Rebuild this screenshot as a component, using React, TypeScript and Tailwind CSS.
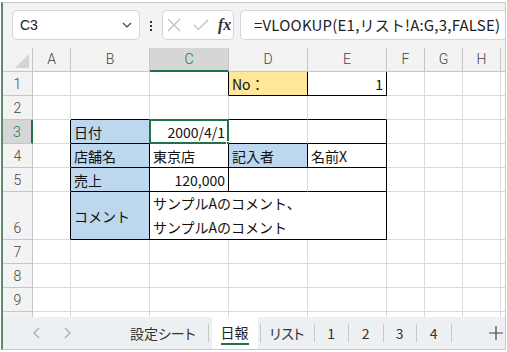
import React from "react";

const GRID = "#dadada";
const BLK = "#000000";
const BLUE = "#bdd7ee";
const ORANGE = "#ffe699";

type Cell = {
  r: number;
  c: number;
  cs?: number;
  text?: string;
  lines?: string[];
  bg?: string;
  align?: "left" | "right";
  br?: string;
  bb?: string;
  center?: boolean;
};

const colLetters = ["A", "B", "C", "D", "E", "F", "G", "H", "I"];
const rowHeights = [24, 24, 24, 24, 24, 48, 24, 24, 24, 24];

function buildCells(): Cell[] {
  const special: Record<string, Partial<Cell>> = {
    "1-3": { br: BLK },
    "1-4": { text: "No：", bg: ORANGE, br: BLK, bb: BLK },
    "1-5": { text: "1", align: "right", br: BLK, bb: BLK },
    "2-2": { bb: BLK },
    "2-3": { bb: BLK },
    "2-4": { bb: BLK },
    "2-5": { bb: BLK },
    "3-1": { br: BLK },
    "4-1": { br: BLK },
    "5-1": { br: BLK },
    "6-1": { br: BLK },
    "3-2": { text: "日付", bg: BLUE, br: BLK, bb: BLK },
    "3-3": { text: "2000/4/1", align: "right", br: BLK, bb: BLK },
    "3-4": { bb: BLK },
    "3-5": { br: BLK, bb: BLK },
    "4-2": { text: "店舗名", bg: BLUE, br: BLK, bb: BLK },
    "4-3": { text: "東京店", br: BLK, bb: BLK },
    "4-4": { text: "記入者", bg: BLUE, br: BLK, bb: BLK },
    "4-5": { text: "名前X", br: BLK, bb: BLK },
    "5-2": { text: "売上", bg: BLUE, br: BLK, bb: BLK },
    "5-3": { text: "120,000", align: "right", br: BLK, bb: BLK },
    "5-4": { bb: BLK },
    "5-5": { br: BLK, bb: BLK },
    "6-2": { text: "コメント", bg: BLUE, br: BLK, bb: BLK, center: true },
  };
  const cells: Cell[] = [];
  for (let r = 1; r <= 10; r++) {
    for (let c = 1; c <= 9; c++) {
      if (r === 6 && (c === 4 || c === 5)) continue;
      if (r === 6 && c === 3) {
        cells.push({
          r,
          c,
          cs: 3,
          lines: ["サンプルAのコメント、", "サンプルAのコメント"],
          br: BLK,
          bb: BLK,
        });
        continue;
      }
      const s = special[`${r}-${c}`] || {};
      cells.push({ r, c, ...s });
    }
  }
  return cells;
}

function XIcon() {
  return (
    <svg width="14" height="14" viewBox="0 0 14 14">
      <path d="M1 1 L13 13 M13 1 L1 13" stroke="#bdbdbd" strokeWidth="1.2" fill="none" />
    </svg>
  );
}
function CheckIcon() {
  return (
    <svg width="16" height="12" viewBox="0 0 16 12">
      <path d="M1 6 L5.5 10.5 L15 1" stroke="#bdbdbd" strokeWidth="1.2" fill="none" />
    </svg>
  );
}
function Chevron() {
  return (
    <svg width="10" height="6" viewBox="0 0 10 6">
      <path d="M1 1 L5 5 L9 1" stroke="#444" strokeWidth="1.2" fill="none" />
    </svg>
  );
}

export default function App() {
  const cells = buildCells();
  const cellFont = { fontFamily: '"Noto Sans CJK JP", "Noto Sans", sans-serif' };
  return (
    <div className="w-[507px] h-[352px] bg-white overflow-hidden">
      <div className="mt-[2px] ml-[1px] w-[505px] h-[348px] border-t border-[#c8c8c8] border-l-2 border-l-[#5b8c6e] border-r border-r-[#c8c8c8] border-b border-b-[#c8c8c8] flex flex-col overflow-hidden bg-[#f3f3f3]">
        {/* Formula bar */}
        <div
          className="h-[45px] flex items-center pl-[9px] shrink-0"
          style={{ fontFamily: '"Noto Sans CJK JP", "Noto Sans", sans-serif' }}
        >
          <div className="w-[128px] h-[30px] bg-white border border-[#d6d6d6] rounded-[5px] flex items-center justify-between pl-[7px] pr-[7px] -mt-[1px]">
            <span className="text-[14px] text-[#222] leading-none" style={{ fontFamily: '"Liberation Sans", Arial, sans-serif' }}>C3</span>
            <Chevron />
          </div>
          <div className="w-[22px] flex justify-center">
            <div className="flex flex-col gap-[2px]">
              <div className="w-[2px] h-[2px] bg-[#333]" />
              <div className="w-[2px] h-[2px] bg-[#333]" />
              <div className="w-[2px] h-[2px] bg-[#333]" />
            </div>
          </div>
          <div className="w-[72px] h-[30px] bg-white border border-[#d6d6d6] rounded-[5px] flex items-center pl-[4px] -mt-[1px]">
            <div className="w-[14px] flex justify-center"><XIcon /></div>
            <div className="ml-[12px]"><CheckIcon /></div>
            <span
              className="ml-[9px] text-[16px] italic font-bold text-[#333] leading-none"
              style={{ fontFamily: '"Liberation Serif", "Times New Roman", serif' }}
            >
              fx
            </span>
          </div>
          <div className="ml-[6px] flex-1 h-[30px] bg-white border border-[#d6d6d6] border-r-0 rounded-l-[5px] flex items-center pl-[13px] -mt-[1px] overflow-hidden whitespace-nowrap">
            <span className="text-[15px] tracking-[0.2px] text-[#222]">=VLOOKUP(E1,リスト!A:G,3,FALSE)</span>
          </div>
        </div>

        {/* Grid */}
        <div className="h-[269px] shrink-0 overflow-hidden bg-white">
          <div
            className="grid grid-cols-[30px_38px_79px_79px_79px_79px_38px_38px_38px_20px]"
            style={{ gridTemplateRows: `24px ${rowHeights.map((h) => h + "px").join(" ")}` }}
          >
            <div className="relative bg-[#f3f3f3] border-r border-b border-[#c6c6c6]" style={{ gridRow: 1, gridColumn: 1 }}>
              <div className="absolute right-[3px] bottom-[3px] w-0 h-0 border-l-[14px] border-l-transparent border-b-[14px] border-b-[#d4d4d4]" />
            </div>
            {colLetters.map((l, i) => {
              const sel = l === "C";
              return (
                <div
                  key={l}
                  className={`flex items-center justify-center text-[14px] border-r ${sel ? "bg-[#d6d6d6] text-[#217346] border-b-2 border-b-[#217346] border-r-[#c6c6c6]" : "bg-[#f3f3f3] text-[#444] border-b border-[#c6c6c6]"}`}
                  style={{ gridRow: 1, gridColumn: i + 2, fontFamily: 'Roboto, "Noto Sans", sans-serif', fontWeight: 300 }}
                >
                  {l === "I" ? "" : l}
                </div>
              );
            })}
            {rowHeights.map((_, i) => {
              const r = i + 1;
              const sel = r === 3;
              return (
                <div
                  key={r}
                  className={`flex items-end justify-center pb-[1px] text-[14px] leading-[20px] border-b ${sel ? "bg-[#d6d6d6] text-[#217346] border-r-2 border-r-[#217346] border-b-[#c6c6c6]" : "bg-[#f3f3f3] text-[#444] border-r border-[#c6c6c6]"}`}
                  style={{ gridRow: r + 1, gridColumn: 1, fontFamily: 'Roboto, "Noto Sans", sans-serif', fontWeight: 300 }}
                >
                  {r <= 9 ? r : ""}
                </div>
              );
            })}
            {cells.map((cell) => (
              <div
                key={`${cell.r}-${cell.c}`}
                className={`relative flex border-r border-b text-[14px] text-[#111] whitespace-nowrap ${cell.center ? "items-center" : "items-end"} ${cell.align === "right" ? "justify-end pr-[3px]" : "justify-start pl-[3px]"}`}
                style={{
                  gridRow: cell.r + 1,
                  gridColumn: `${cell.c + 1} / span ${cell.cs || 1}`,
                  backgroundColor: cell.bg || "#ffffff",
                  borderRightColor: cell.br || GRID,
                  borderBottomColor: cell.bb || GRID,
                  ...cellFont,
                }}
              >
                {cell.lines ? (
                  <div className="flex flex-col leading-[24px]">
                    {cell.lines.map((t) => (
                      <span key={t}>{t}</span>
                    ))}
                  </div>
                ) : (
                  <span className="leading-[22px]">{cell.text}</span>
                )}
                {cell.r === 3 && cell.c === 3 && (
                  <>
                    <div className="absolute -left-[1px] -top-[1px] -right-[1px] -bottom-[1px] border-2 border-[#217346] pointer-events-none" />
                    <div className="absolute -right-[4px] -bottom-[4px] w-[6px] h-[6px] bg-[#217346] border border-white" />
                  </>
                )}
              </div>
            ))}
          </div>
        </div>

        {/* Sheet tabs */}
        <div
          className="flex-1 bg-[#edf0f2] flex items-stretch text-[14px] text-[#333] [font-feature-settings:'palt']"
          style={{ fontFamily: '"Noto Sans CJK JP", "Noto Sans", sans-serif' }}
        >
          <div className="w-[108px] flex items-center pl-[29px] gap-[20px]">
            <svg width="10" height="12" viewBox="0 0 10 12"><path d="M7 1 L2 6 L7 11" stroke="#a8a8a8" strokeWidth="1.2" fill="none" /></svg>
            <svg width="10" height="12" viewBox="0 0 10 12"><path d="M3 1 L8 6 L3 11" stroke="#a8a8a8" strokeWidth="1.2" fill="none" /></svg>
          </div>
          <div className="flex items-center pl-[19px] pr-[12px]">
            <span>設定シート</span>
          </div>
          <div className="w-px h-[18px] bg-[#c8c8c8] self-center" />
          <div className="ml-[3px] w-[46px] bg-white flex flex-col items-center justify-center relative">
            <span className="text-[#222] leading-[20px]">日報</span>
            <div className="w-[28px] h-[2px] bg-[#217346] mt-[1px]" />
          </div>
          <div className="ml-[2px] w-px h-[18px] bg-[#c8c8c8] self-center" />
          <div className="w-[53px] flex items-center justify-center"><span>リスト</span></div>
          <div className="w-px h-[18px] bg-[#c8c8c8] self-center" />
          <div className="w-[33px] flex items-center justify-center"><span>1</span></div>
          <div className="w-px h-[18px] bg-[#c8c8c8] self-center" />
          <div className="w-[34px] flex items-center justify-center"><span>2</span></div>
          <div className="w-px h-[18px] bg-[#c8c8c8] self-center" />
          <div className="w-[32px] flex items-center justify-center"><span>3</span></div>
          <div className="w-px h-[18px] bg-[#c8c8c8] self-center" />
          <div className="w-[34px] flex items-center justify-center"><span>4</span></div>
          <div className="w-px h-[18px] bg-[#c8c8c8] self-center" />
          <div className="flex-1 flex items-center justify-end pr-[2px]">
            <svg width="14" height="14" viewBox="0 0 14 14"><path d="M7 0 V14 M0 7 H14" stroke="#444" strokeWidth="1.2" fill="none" /></svg>
          </div>
        </div>
      </div>
    </div>
  );
}
